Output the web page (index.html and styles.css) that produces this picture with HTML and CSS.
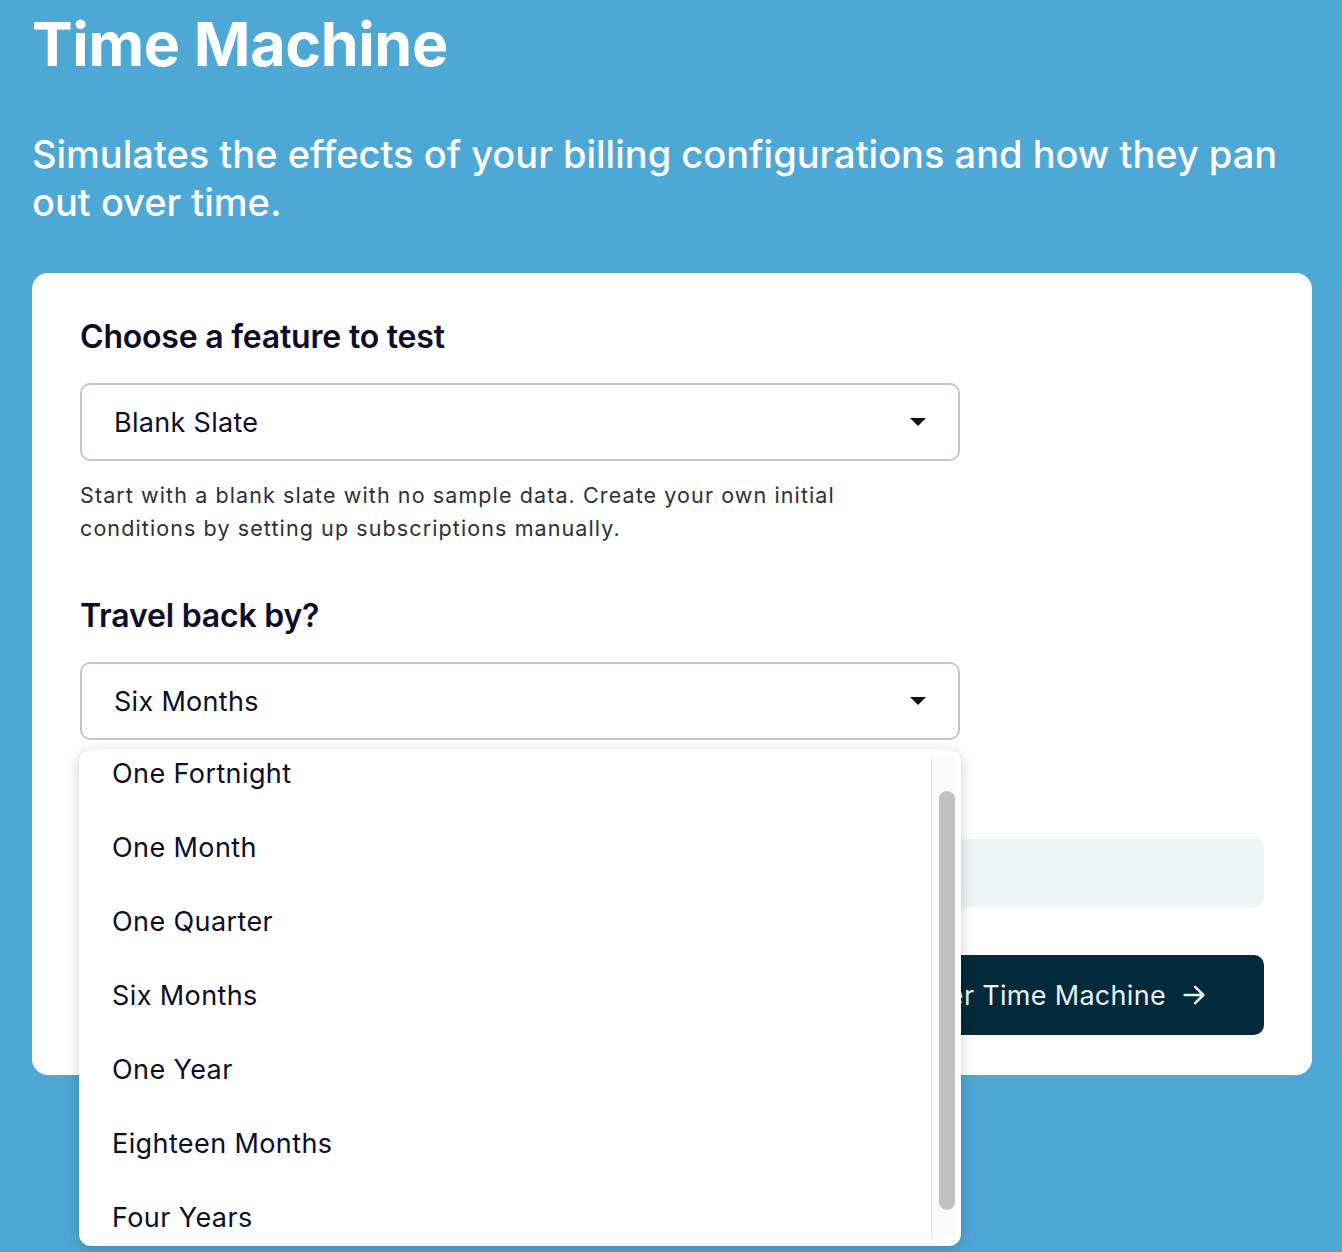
FILE: index.html
```html
<!DOCTYPE html>
<html lang="en">
<head>
<meta charset="utf-8">
<title>Time Machine</title>
<link rel="stylesheet" href="styles.css">
</head>
<body>
<header class="hero">
  <h1 class="title">Time Machine</h1>
  <p class="subtitle">Simulates the effects of your billing configurations and how they pan out over time.</p>
</header>
<main class="card">
  <section class="field">
    <h2 class="label">Choose a feature to test</h2>
    <div class="select">
      <span>Blank Slate</span>
      <span class="caret"></span>
    </div>
    <p class="help">Start with a blank slate with no sample data. Create your own initial conditions by setting up subscriptions manually.</p>
  </section>
  <section class="field field-travel">
    <h2 class="label">Travel back by?</h2>
    <div class="select-wrap">
      <div class="select">
        <span>Six Months</span>
        <span class="caret"></span>
      </div>
      <div class="menu">
        <ul class="options">
          <li>One Fortnight</li>
          <li>One Month</li>
          <li>One Quarter</li>
          <li>Six Months</li>
          <li>One Year</li>
          <li>Eighteen Months</li>
          <li>Four Years</li>
        </ul>
        <div class="scrollbar"><div class="thumb"></div></div>
      </div>
    </div>
  </section>
  <div class="info"></div>
  <div class="actions">
    <button class="enter">Enter Time Machine
      <svg width="28" height="28" viewBox="0 0 24 24" fill="none" stroke="currentColor" stroke-width="2.2" stroke-linecap="round" stroke-linejoin="round"><path d="M4 12h15"/><path d="M13 5l7 7-7 7"/></svg>
    </button>
  </div>
</main>
</body>
</html>
```
FILE: styles.css
```css
* { box-sizing: border-box; }
html, body { margin: 0; padding: 0; }
body {
  background: #4ea8d6;
  font-family: Inter, "Noto Sans", sans-serif;
  color: #0c0e29;
  height: 1252px;
  overflow: hidden;
}
.hero { padding: 0 32px; color: #fff; }
.title {
  margin: 0;
  padding-top: 8px;
  font-size: 61px;
  line-height: 72px;
  font-weight: 700;
  letter-spacing: -0.4px;
}
.subtitle {
  margin: 50px 0 0;
  font-size: 38px;
  line-height: 48px;
  font-weight: 500;
  letter-spacing: 0;
}
.card {
  margin: 47px 30px 0 32px;
  background: #fff;
  border-radius: 16px;
  padding: 42px 48px 40px 48px;
  height: 802px;
}
.label {
  margin: 0;
  font-size: 32px;
  line-height: 44px;
  font-weight: 600;
  letter-spacing: -0.2px;
}
.select {
  margin-top: 24px;
  width: 880px;
  height: 78px;
  border: 2px solid #c3c6d0;
  border-radius: 10px;
  display: flex;
  align-items: center;
  justify-content: space-between;
  padding: 0 32px 0 32px;
  font-size: 27px;
  letter-spacing: 0.3px;
}
.caret {
  width: 0; height: 0;
  border-left: 8px solid transparent;
  border-right: 8px solid transparent;
  border-top: 8px solid #111;
}
.help {
  margin: 18px 0 0;
  font-size: 21.5px;
  line-height: 33px;
  color: #2c2f3a;
  letter-spacing: 1.1px;
  width: 820px;
}
.field-travel { margin-top: 49px; }
.select-wrap { position: relative; }
.menu {
  position: absolute;
  left: -1px;
  top: 87px;
  width: 882px;
  height: 497px;
  background: #fff;
  border-radius: 12px;
  box-shadow: 0 4px 16px rgba(0,0,0,0.18), 0 0 2px rgba(0,0,0,0.08);
  overflow: hidden;
  z-index: 5;
}
.options {
  list-style: none;
  margin: -13px 0 0;
  padding: 0;
}
.options li {
  height: 74px;
  display: flex;
  align-items: center;
  padding-left: 33px;
  font-size: 27px;
  letter-spacing: 0.4px;
}
.scrollbar {
  position: absolute;
  right: 5px;
  top: 8px;
  bottom: 8px;
  width: 25px;
  background: #fafafa;
  border-left: 1px solid #e6e6e6;
}
.thumb {
  position: absolute;
  left: 7px;
  top: 34px;
  width: 16px;
  height: 419px;
  background: #c1c1c1;
  border-radius: 8px;
}
.info {
  margin-top: 99px;
  height: 68px;
  background: #eff4f5;
  border-radius: 8px;
}
.actions {
  margin-top: 48px;
  display: flex;
  justify-content: flex-end;
}
.enter {
  height: 80px;
  background: #022a3a;
  color: #e8f1f6;
  border: none;
  border-radius: 10px;
  font-family: inherit;
  font-size: 27px;
  letter-spacing: 0.3px;
  display: flex;
  align-items: center;
  gap: 14px;
  padding: 0 56px 0 56px;
}
```
